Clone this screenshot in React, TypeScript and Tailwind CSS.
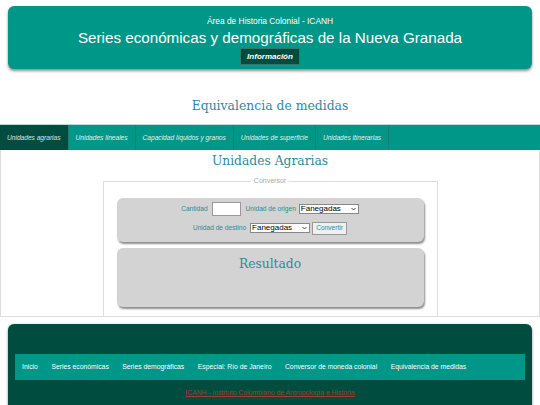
import React from 'react';

const tabs = [
  'Unidades agrarias',
  'Unidades lineales',
  'Capacidad líquidos y granos',
  'Unidades de superficie',
  'Unidades itinerarias',
];

const footerLinks = [
  'Inicio',
  'Series económicas',
  'Series demográficas',
  'Especial: Río de Janeiro',
  'Conversor de moneda colonial',
  'Equivalencia de medidas',
];

function FakeSelect({ value }: { value: string }) {
  return (
    <div className="flex items-center justify-between w-[60px] h-[10px] bg-white border border-[#888] pl-[1px] pr-[2px] text-[8px] leading-none text-black">
      <span>{value}</span>
      <svg width="5" height="4" viewBox="0 0 5 4">
        <path d="M0.5 1 L2.5 3 L4.5 1" fill="none" stroke="#333" strokeWidth="0.9" />
      </svg>
    </div>
  );
}

export default function App() {
  return (
    <div className="w-[540px] h-[405px] overflow-hidden bg-white font-['Liberation_Sans',Arial,sans-serif]">
      {/* cabecera */}
      <header className="mx-2 mt-[6px] h-[63px] pt-[9px] rounded-md bg-[#009688] shadow-[0_2px_3px_rgba(0,0,0,0.45)] flex flex-col items-center text-white">
        <div className="text-[8.4px] leading-[12px]">Área de Historia Colonial - ICANH</div>
        <h1 className="mt-[1px] text-[15.2px] leading-[20px]">Series económicas y demográficas de la Nueva Granada</h1>
        <button className="h-[17px] px-[6px] bg-[#004d40] border border-[#2f7a6e] text-[8px] font-bold italic text-white">
          Información
        </button>
      </header>

      <h2 className="mt-[27px] h-[20px] text-center text-[12.4px] leading-[20px] text-[#2e8a9c] font-['DejaVu_Serif',serif]">
        Equivalencia de medidas
      </h2>

      {/* pestañas */}
      <nav className="mt-[8px] h-[26px] flex bg-[#009688] border-t border-[#b2dfdb]">
        {tabs.map((t, i) => (
          <div
            key={t}
            className={`flex items-center px-[7px] border-r border-[#1d7d72] text-[6.6px] italic ${
              i === 0 ? 'bg-[#004d40] text-[#e0e0e0]' : 'text-[#e0f2f1]'
            }`}
          >
            {t}
          </div>
        ))}
      </nav>

      {/* contenido */}
      <section className="h-[167px] border border-t-0 border-[#dddddd] pt-[1px]">
        <h3 className="text-center text-[12.3px] leading-[20px] text-[#2e8a9c] font-['DejaVu_Serif',serif]">
          Unidades Agrarias
        </h3>
        <fieldset className="mx-auto mt-[5px] w-[335px] h-[141px] border border-[#dddddd] px-[13px]">
          <legend className="mx-auto px-[3px] text-[7px] leading-[10px] text-[#aaaaaa]">Conversor</legend>
          <div className="mt-[12px] h-[44px] pt-[4px] rounded-md bg-[#d3d3d3] shadow-[1px_2px_2px_rgba(0,0,0,0.45)]">
            <div className="h-[14px] flex items-center justify-center text-[6.6px] text-[#2e8a9c]">
              <span>Cantidad</span>
              <div className="ml-[4px] w-[29px] h-[14px] bg-white border border-[#999]" />
              <span className="ml-[5px]">Unidad de origen</span>
              <div className="ml-[3px]">
                <FakeSelect value="Fanegadas" />
              </div>
            </div>
            <div className="mt-[5px] h-[14px] flex items-center justify-center text-[6.6px] text-[#2e8a9c]">
              <span>Unidad de destino</span>
              <div className="ml-[4px]">
                <FakeSelect value="Fanegadas" />
              </div>
              <button className="ml-[2px] w-[35px] h-[13px] bg-[#f0f0f0] border border-[#999] text-[6.6px] text-[#2e8a9c]">
                Convertir
              </button>
            </div>
          </div>
          <div className="mt-[6px] h-[59px] pt-[6px] rounded-md bg-[#d3d3d3] shadow-[1px_2px_2px_rgba(0,0,0,0.45)]">
            <h4 className="text-center text-[12.3px] leading-[20px] text-[#2e8a9c] font-['DejaVu_Serif',serif]">
              Resultado
            </h4>
          </div>
        </fieldset>
      </section>

      {/* pie */}
      <footer className="mx-2 mt-[7px] h-[90px] pt-[30px] rounded-md bg-[#004d40] shadow-[0_1px_3px_rgba(0,0,0,0.45)]">
        <div className="mx-[7px] h-[26px] flex items-center bg-[#009688] pl-[7px]">
          {footerLinks.map((l) => (
            <span key={l} className="mr-[13.5px] text-[6.8px] text-white">
              {l}
            </span>
          ))}
        </div>
        <div className="mt-[7px] text-center text-[6.8px] leading-[12px]">
          <a className="underline text-[#9c3f30]">ICANH - Instituto Colombiano de Antropología e Historia</a>
        </div>
      </footer>
    </div>
  );
}
